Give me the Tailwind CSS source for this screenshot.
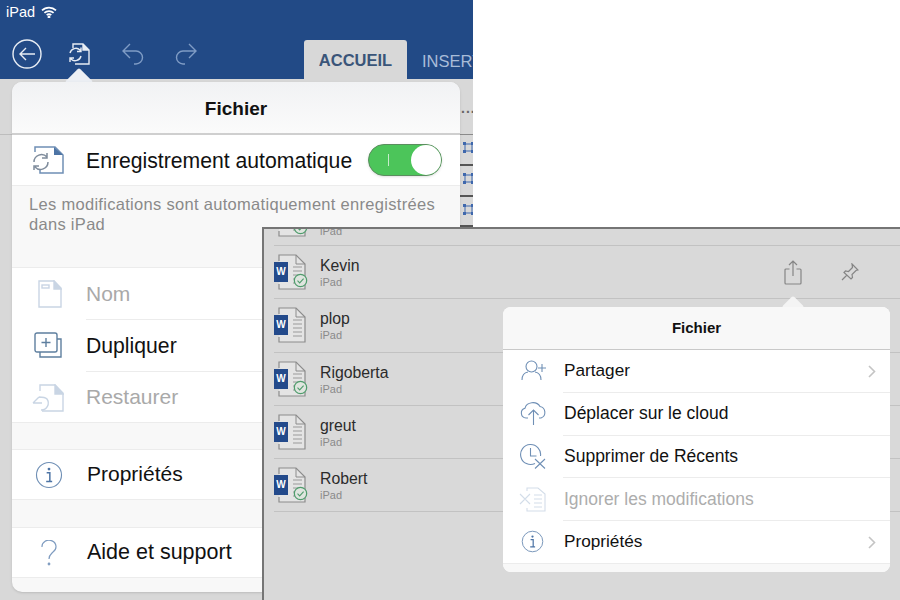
<!DOCTYPE html>
<html lang="fr">
<head>
    <meta charset="UTF-8">
    <meta name="viewport" content="width=device-width, initial-scale=1.0">
    <title>Fichier</title>
    <script src="https://cdn.jsdelivr.net/npm/@tailwindcss/browser@4"></script>
</head>
<body class="bg-white font-['Liberation_Sans',sans-serif] overflow-hidden">
    <svg class="hidden">
        <symbol id="doc" viewBox="0 0 34 36">
            <path d="M4 7V1h17l9 9v25H4v-5" fill="#e4e4e4" stroke="#8c8c8c" stroke-width="1.2"/>
            <path d="M21 1v9h9" fill="none" stroke="#8c8c8c" stroke-width="1"/>
            <path d="M18 13h9M18 17h9M18 21h9M18 25h9M18 29h9" stroke="#9a9a9a" stroke-width="1"/>
        </symbol>
        <symbol id="check" viewBox="0 0 16 16">
            <circle cx="8" cy="8" r="6.6" fill="#dfe5df" stroke="#4f9c6c" stroke-width="1.3"/>
            <path d="M4.800 8.200l2.300 2.300 4.200-4.600" fill="none" stroke="#4f9c6c" stroke-width="1.2"/>
        </symbol>
        <symbol id="info" viewBox="0 0 30 30">
            <circle cx="15" cy="15" r="13.400" fill="none" stroke="#6f8fb5" stroke-width="1.2"/>
            <circle cx="15" cy="8.600" r="1.500" fill="#4d74a5"/>
            <path d="M12.500 12.500h3.400v9M12 22h6.400" fill="none" stroke="#4d74a5" stroke-width="1.6"/>
        </symbol>
        <symbol id="knot" viewBox="0 0 11 11">
            <rect x="2" y="2" width="7" height="7" fill="none" stroke="#3f68ad" stroke-width="1"/>
            <path d="M0 0h3v3H0zM8 0h3v3H8zM0 8h3v3H0zM8 8h3v3H8z" fill="#3f68ad"/>
        </symbol>
    </svg>

    <!-- left screenshot: word toolbar with the file popover -->
    <div class="absolute left-0 top-0 w-[473px] h-[600px] bg-[#d8d8d8] overflow-hidden">
        <div class="h-[79px] bg-[#224a86] relative">
            <div class="flex items-center gap-[6px] pl-[6px] pt-[1px] h-[25px] text-white text-[14.500px]">
                <span>iPad</span>
                <svg class="w-[16px] h-[12px] -mt-[3px]" viewBox="0 0 16 12" fill="none" stroke="#fff" stroke-width="1.7"><path d="M1 4.400a10 10 0 0 1 14 0M3.400 6.900a6.600 6.600 0 0 1 9.200 0M5.700 9.200a3.400 3.400 0 0 1 4.600 0"/><circle cx="8" cy="11" r=".6" fill="#fff"/></svg>
            </div>
            <div class="flex items-center h-[32px] mt-[13px] pl-[12px]">
                <svg class="w-[30px] h-[30px]" viewBox="0 0 30 30" fill="none" stroke="#e8edf4" stroke-width="1.4"><circle cx="15" cy="15" r="14"/><path d="M23 15H8M14 9l-6 6 6 6"/></svg>
                <svg class="w-[24px] h-[22px] ml-[25px]" viewBox="0 0 24 22" fill="none" stroke="#e8edf4" stroke-width="1.4"><path d="M6 5V1h10l6 6v14H8"/><path d="M16 1v6h6" fill="#e8edf4"/><path d="M3 10a6 6 0 0 1 10-3l1 1M14 4.500V8.500h-4M14 13a6 6 0 0 1-10 3l-1-1M3 19v-4h4"/></svg>
                <svg class="w-[22px] h-[22px] ml-[31px]" viewBox="0 0 22 22" fill="none" stroke="#7f9cc5" stroke-width="1.4"><path d="M8 1L1 8l7 7M1 8h13a6.500 6.500 0 0 1 0 13h-2"/></svg>
                <svg class="w-[22px] h-[22px] ml-[31px]" viewBox="0 0 22 22" fill="none" stroke="#7f9cc5" stroke-width="1.4"><path d="M14 1l7 7-7 7M21 8H8a6.500 6.500 0 0 0 0 13h2"/></svg>
            </div>
            <div class="absolute left-[304px] top-[40px] w-[103px] h-[39px] bg-[#d8d8d8] rounded-t-[3px] flex items-center justify-center pt-[2px] text-[16.500px] font-bold text-[#3a5579]">ACCUEIL</div>
            <div class="absolute left-[422px] top-[49px] text-[16.500px] text-[#a9bcd8] whitespace-nowrap">INSERTION</div>
        </div>

        <!-- bits of the document that stick out beside the popover -->
        <div class="absolute left-0 top-[134px] w-[12px] h-px bg-[#bdbdbd]"></div>
        <div class="absolute left-[460px] top-[79px] w-[13px] h-[521px] flex flex-col">
            <div class="h-[56px] border-b border-[#8a8a8a] text-[#666] text-[14px] font-bold pt-[22px] pl-[1px] tracking-[1px] leading-none">...</div>
            <div class="h-[31px] border-b-2 border-[#555] pl-[3px] pt-[7px]"><svg class="w-[11px] h-[11px]"><use href="#knot"/></svg></div>
            <div class="h-[31px] border-b-2 border-[#555] pl-[3px] pt-[7px]"><svg class="w-[11px] h-[11px]"><use href="#knot"/></svg></div>
            <div class="h-[30px] border-b-2 border-[#555] pl-[3px] pt-[7px]"><svg class="w-[11px] h-[11px]"><use href="#knot"/></svg></div>
        </div>

        <!-- file popover -->
        <div class="absolute left-[69px] top-[72px] w-[20px] h-[20px] rotate-45 bg-[#eceff4] rounded-[2px]"></div>
        <div class="absolute left-[12px] top-[82px] w-[448px] h-[510px] bg-[#f8f8f8] rounded-[10px] overflow-hidden shadow-sm flex flex-col">
            <div class="h-[53px] shrink-0 border-b-2 border-[#cfcfcf] bg-gradient-to-b from-[#f1f2f4] to-[#fbfbfb] flex items-center justify-center pt-[3px] text-[19px] font-bold text-[#111]">Fichier</div>
            <div class="h-[51px] shrink-0 bg-white border-b border-[#ececec] flex items-center">
                <svg class="ml-[20px] w-[32px] h-[28px]" viewBox="0 0 32 28" fill="none" stroke="#6f8fb5" stroke-width="1.5"><path d="M3 6V1h20l8 8v18H8v-3"/><path d="M22 1l9 8h-9z" fill="#4d74a5" stroke="none"/><path d="M2 16a7.500 7.500 0 0 1 13-5M15 7v5h-5M16 16a7.500 7.500 0 0 1-13 5M2 24v-4h5" stroke="#7f8c9c"/></svg>
                <span class="ml-[22px] pt-[1px] text-[21.200px] text-[#111] whitespace-nowrap">Enregistrement automatique</span>
                <div class="ml-[16px] w-[74px] h-[32px] rounded-full bg-[#4cc55a] border border-[#5a8e5e] relative shadow">
                    <span class="absolute left-[19px] top-[9px] w-px h-[12px] bg-[#c7eccb]"></span>
                    <span class="absolute right-0 top-0 w-[30px] h-[30px] rounded-full bg-white"></span>
                </div>
            </div>
            <div class="h-[81px] shrink-0 pl-[17px] pt-[8px] text-[16.500px] leading-[20px] text-[#8a8a8a] tracking-[0.3px]">Les modifications sont automatiquement enregistrées<br>dans iPad</div>

            <div class="bg-white border-y border-[#ececec] shrink-0">
                <div class="h-[51px] flex items-center">
                    <svg class="ml-[26px] w-[24px] h-[28px]" viewBox="0 0 24 28" fill="none" stroke="#c9d5e4" stroke-width="1.4"><path d="M1 1h15l7 7v19H1z"/><path d="M16 1l7 8h-7z" fill="#c9d5e4"/><rect x="4" y="5" width="7" height="3"/></svg>
                    <span class="ml-[24px] text-[21px] text-[#a9a9a9]">Nom</span>
                </div>
                <div class="h-[52px] ml-[74px] border-t border-[#ececec] flex items-center relative">
                    <svg class="absolute left-[-52px] top-[12px] w-[28px] h-[26px]" viewBox="0 0 28 26" fill="none" stroke="#5e7f9f" stroke-width="1.4"><path d="M6 20v5h21V7h-4"/><rect x="1" y="1" width="22" height="19" rx="2" fill="#fff"/><path d="M12 6v9M7.500 10.500h9" /></svg>
                    <span class="text-[21.200px] text-[#111]">Dupliquer</span>
                </div>
                <div class="h-[51px] ml-[74px] border-t border-[#ececec] flex items-center relative">
                    <svg class="absolute left-[-54px] top-[12px] w-[32px] h-[28px]" viewBox="0 0 32 28" fill="none" stroke="#c9d5e4" stroke-width="1.4"><path d="M8 7V1h15l8 8v18H10"/><path d="M23 1l8 9h-8z" fill="#c9d5e4"/><path d="M1 19l6-6M1 19h9M9 26a7 7 0 0 0 6-11c-2-2-5-2-8-2"/></svg>
                    <span class="text-[21px] text-[#a9a9a9]">Restaurer</span>
                </div>
            </div>

            <div class="h-[26px] shrink-0"></div>
            <div class="h-[51px] shrink-0 bg-white border-y border-[#ececec] flex items-center">
                <svg class="ml-[23px] w-[28px] h-[28px]"><use href="#info"/></svg>
                <span class="ml-[24px] pb-[1px] text-[21px] text-[#111]">Propriétés</span>
            </div>
            <div class="h-[27px] shrink-0"></div>
            <div class="h-[51px] shrink-0 bg-white border-y border-[#ececec] flex items-center">
                <svg class="ml-[29px] w-[16px] h-[26px]" viewBox="0 0 16 26" fill="none" stroke="#7f9cc0" stroke-width="1.2"><path d="M1 7a7 6.500 0 1 1 11 5c-2 2-4 3-4 7"/><circle cx="8" cy="24" r=".8"/></svg>
                <span class="ml-[30px] pb-[1px] text-[21.500px] text-[#111]">Aide et support</span>
            </div>
        </div>
    </div>

    <!-- right screenshot: recent documents list -->
    <div class="absolute left-[262px] top-[227px] w-[638px] h-[373px] bg-[#d9d9d9] border-t-2 border-l-2 border-[#757575] overflow-hidden">
        <div class="-mt-[37px] pl-[10px]">
            <div class="h-[54px] flex items-center border-b border-[#c2c2c2]">
                <div class="w-[46px] h-[36px] relative shrink-0">
                    <svg class="absolute left-[1px] top-0 w-[34px] h-[36px]"><use href="#doc"/></svg>
                    <span class="absolute left-0 top-[8px] w-[14px] h-[20px] bg-[#234a8b] text-white text-[10px] font-bold leading-[20px] text-center">W</span>
                    <svg class="absolute left-[19px] top-[19px] w-[15px] h-[15px]"><use href="#check"/></svg>
                </div>
                <div class="text-[11px] text-[#8a8a8a] self-end pb-[6px]">iPad</div>
            </div>
            <div class="h-[53.300px] flex items-center border-b border-[#c2c2c2]">
                <div class="w-[46px] h-[36px] relative shrink-0">
                    <svg class="absolute left-[1px] top-0 w-[34px] h-[36px]"><use href="#doc"/></svg>
                    <span class="absolute left-0 top-[8px] w-[14px] h-[20px] bg-[#234a8b] text-white text-[10px] font-bold leading-[20px] text-center">W</span>
                    <svg class="absolute left-[19px] top-[19px] w-[15px] h-[15px]"><use href="#check"/></svg>
                </div>
                <div class="grow pt-[2px]"><div class="text-[15.800px] leading-[18px] text-[#2b2b2b]">Kevin</div><div class="text-[11px] leading-[14px] text-[#8a8a8a]">iPad</div></div>
                <svg class="w-[18px] h-[25px] mr-[39px]" viewBox="0 0 18 25" fill="none" stroke="#858585" stroke-width="1.2"><path d="M5.500 9H2a1 1 0 0 0-1 1v13a1 1 0 0 0 1 1h14a1 1 0 0 0 1-1V10a1 1 0 0 0-1-1h-3.500M9 16V1M5 5l4-4 4 4"/></svg>
                <svg class="w-[18px] h-[18px] mr-[41px]" viewBox="0 0 18 18" fill="none" stroke="#858585" stroke-width="1.2"><path d="M11 1l6 6-2 .5-4 4 .5 3-1.500 1.500L3 9.500 4.500 8l3 .5 4-4zM6 12l-5 5"/></svg>
            </div>
            <div class="h-[53.300px] flex items-center border-b border-[#c2c2c2]">
                <div class="w-[46px] h-[36px] relative shrink-0">
                    <svg class="absolute left-[1px] top-0 w-[34px] h-[36px]"><use href="#doc"/></svg>
                    <span class="absolute left-0 top-[8px] w-[14px] h-[20px] bg-[#234a8b] text-white text-[10px] font-bold leading-[20px] text-center">W</span>
                </div>
                <div class="pt-[2px]"><div class="text-[15.800px] leading-[18px] text-[#2b2b2b]">plop</div><div class="text-[11px] leading-[14px] text-[#8a8a8a]">iPad</div></div>
            </div>
            <div class="h-[53.300px] flex items-center border-b border-[#c2c2c2]">
                <div class="w-[46px] h-[36px] relative shrink-0">
                    <svg class="absolute left-[1px] top-0 w-[34px] h-[36px]"><use href="#doc"/></svg>
                    <span class="absolute left-0 top-[8px] w-[14px] h-[20px] bg-[#234a8b] text-white text-[10px] font-bold leading-[20px] text-center">W</span>
                    <svg class="absolute left-[19px] top-[19px] w-[15px] h-[15px]"><use href="#check"/></svg>
                </div>
                <div class="pt-[2px]"><div class="text-[15.800px] leading-[18px] text-[#2b2b2b]">Rigoberta</div><div class="text-[11px] leading-[14px] text-[#8a8a8a]">iPad</div></div>
            </div>
            <div class="h-[53.300px] flex items-center border-b border-[#c2c2c2]">
                <div class="w-[46px] h-[36px] relative shrink-0">
                    <svg class="absolute left-[1px] top-0 w-[34px] h-[36px]"><use href="#doc"/></svg>
                    <span class="absolute left-0 top-[8px] w-[14px] h-[20px] bg-[#234a8b] text-white text-[10px] font-bold leading-[20px] text-center">W</span>
                </div>
                <div class="pt-[2px]"><div class="text-[15.800px] leading-[18px] text-[#2b2b2b]">greut</div><div class="text-[11px] leading-[14px] text-[#8a8a8a]">iPad</div></div>
            </div>
            <div class="h-[53.300px] flex items-center border-b border-[#c2c2c2]">
                <div class="w-[46px] h-[36px] relative shrink-0">
                    <svg class="absolute left-[1px] top-0 w-[34px] h-[36px]"><use href="#doc"/></svg>
                    <span class="absolute left-0 top-[8px] w-[14px] h-[20px] bg-[#234a8b] text-white text-[10px] font-bold leading-[20px] text-center">W</span>
                    <svg class="absolute left-[19px] top-[19px] w-[15px] h-[15px]"><use href="#check"/></svg>
                </div>
                <div class="pt-[2px]"><div class="text-[15.800px] leading-[18px] text-[#2b2b2b]">Robert</div><div class="text-[11px] leading-[14px] text-[#8a8a8a]">iPad</div></div>
            </div>
        </div>

        <!-- share popover -->
        <div class="absolute left-[521px] top-[70px] w-[16px] h-[16px] rotate-45 bg-[#f4f4f4] rounded-[2px]"></div>
        <div class="absolute left-[239px] top-[78px] w-[387px] h-[265px] bg-white rounded-[8px] overflow-hidden flex flex-col">
            <div class="h-[43px] shrink-0 bg-[#f8f8f8] border-b border-[#c9c9c9] flex items-center justify-center text-[15px] font-bold text-[#111]">Fichier</div>
            <div class="h-[42px] shrink-0 flex items-center relative">
                <svg class="absolute left-[18px] top-[10px] w-[26px] h-[21px]" viewBox="0 0 26 21" fill="none" stroke="#6f8fb5" stroke-width="1.1"><circle cx="10.500" cy="6.500" r="5.500"/><path d="M1 20c0-5 3-7.500 6-8M20 20c0-5-3-7.500-6-8M21 4v8M17 8h8"/></svg>
                <span class="ml-[61px] text-[17.200px] text-[#111]">Partager</span>
                <svg class="absolute right-[14px] top-[15px] w-[8px] h-[13px]" viewBox="0 0 8 13" fill="none" stroke="#c4c4c4" stroke-width="1.600"><path d="M1 1l5.500 5.500L1 12"/></svg>
            </div>
            <div class="h-[43px] shrink-0 ml-[60px] pl-[1px] border-t border-[#ececec] flex items-center relative">
                <svg class="absolute -left-[43px] top-[8px] w-[27px] h-[24px]" viewBox="0 0 27 24" fill="none" stroke="#6f8fb5" stroke-width="1.1"><path d="M8 17H6a5 5 0 0 1-1-9.800 8 7 0 0 1 15-1.700 6 6 0 0 1 1 11.500h-2"/><path d="M13.500 24V9M8.500 14l5-5 5 5"/></svg>
                <span class="pb-[1px] text-[17.500px] text-[#111]">Déplacer sur le cloud</span>
            </div>
            <div class="h-[42px] shrink-0 ml-[60px] pl-[1px] border-t border-[#ececec] flex items-center relative">
                <svg class="absolute -left-[43px] top-[7px] w-[26px] h-[26px]" viewBox="0 0 26 26" fill="none" stroke="#6f8fb5" stroke-width="1.1"><path d="M15 20.500A10 10 0 1 1 20.500 13"/><path d="M10.500 5v8h6M15 16l10 9.500M25 16L15 25.500"/></svg>
                <span class="text-[17.500px] text-[#111]">Supprimer de Récents</span>
            </div>
            <div class="h-[43px] shrink-0 ml-[60px] pl-[1px] border-t border-[#ececec] flex items-center relative">
                <svg class="absolute -left-[44px] top-[9px] w-[27px] h-[25px]" viewBox="0 0 27 25" fill="none" stroke="#d3dde9" stroke-width="1.1"><path d="M8 4V1h11l7 6v17H8v-3M1 7l10 10M11 7L1 17M15 8h8M15 12h8M15 16h8M15 20h8"/></svg>
                <span class="text-[17.500px] text-[#adadad]">Ignorer les modifications</span>
            </div>
            <div class="h-[43px] shrink-0 ml-[60px] pl-[1px] border-t border-[#ececec] flex items-center relative">
                <svg class="absolute -left-[42px] top-[9px] w-[23px] h-[23px]"><use href="#info"/></svg>
                <span class="text-[17.200px] text-[#111]">Propriétés</span>
                <svg class="absolute right-[14px] top-[15px] w-[8px] h-[13px]" viewBox="0 0 8 13" fill="none" stroke="#c4c4c4" stroke-width="1.600"><path d="M1 1l5.500 5.500L1 12"/></svg>
            </div>
            <div class="grow bg-[#f8f8f8] border-t border-[#ececec]"></div>
        </div>
    </div>
</body>
</html>
